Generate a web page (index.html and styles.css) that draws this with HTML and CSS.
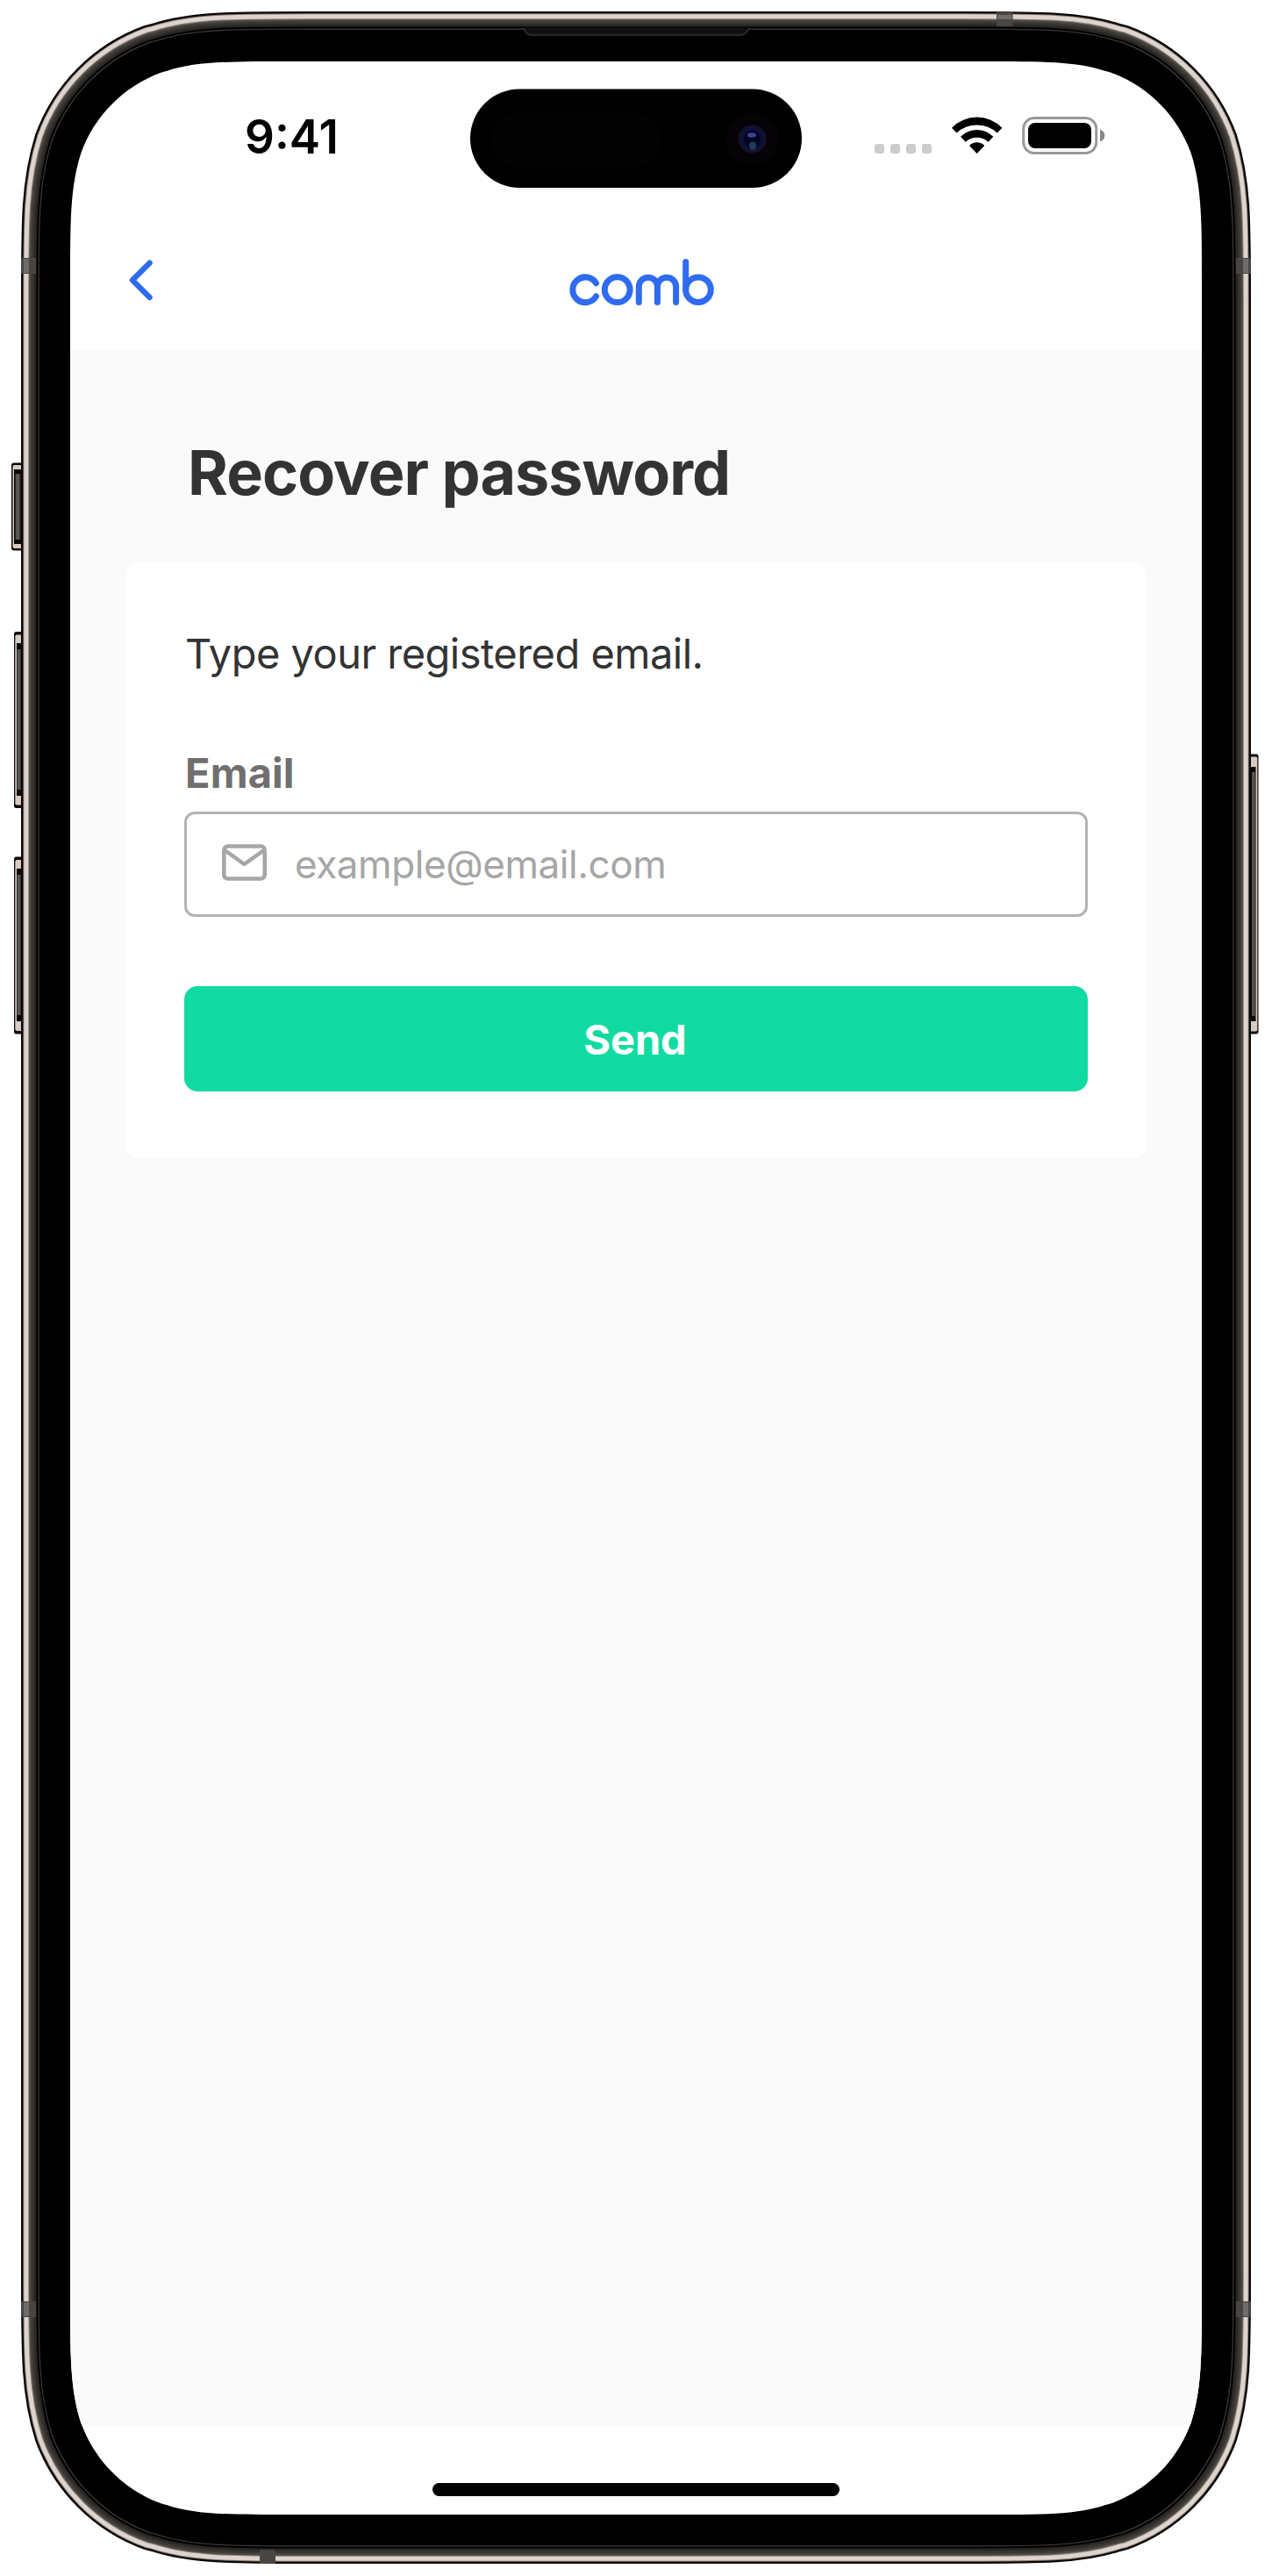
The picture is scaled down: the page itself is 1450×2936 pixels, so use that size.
FILE: index.html
```html
<!DOCTYPE html>
<html lang="en">
<head>
<meta charset="utf-8">
<title>Recover password</title>
<link rel="stylesheet" href="styles.css">
</head>
<body>
<div class="device">
  <svg class="frame" width="1450" height="2936" viewBox="0 0 1450 2936" aria-hidden="true">
    <defs>
      <path id="body" d="M350.7 34H1099.3C1187.3 34 1231.3 34 1271 47.1L1278.7 49C1330.4 67.8 1371.2 108.6 1390 160.3C1405 207.7 1405 251.7 1405 339.7V2595.3C1405 2683.3 1405 2727.3 1390 2774.7C1371.2 2826.4 1330.4 2867.2 1278.7 2886L1271 2887.9C1231.3 2901 1187.3 2901 1099.3 2901H350.7C262.7 2901 218.7 2901 179 2887.9L171.3 2886C119.6 2867.2 78.8 2826.4 60 2774.7C45 2727.3 45 2683.3 45 2595.3V339.7C45 251.7 45 207.7 60 160.3C78.8 108.6 119.6 67.8 171.3 49L179 47.1C218.7 34 262.7 34 350.7 34Z"/>
      <linearGradient id="key" x1="0" x2="1" y1="0" y2="0"><stop offset="0" stop-color="#4b4542"/><stop offset=".5" stop-color="#655f5b"/><stop offset="1" stop-color="#2c2928"/></linearGradient>
    </defs>
    <g class="keys">
      <rect x="13" y="519.5" width="16" height="108" rx="3" fill="none"/>
      <rect x="13" y="527.5" width="16" height="100" rx="3" fill="#0c0a09"/>
      <rect x="14.5" y="530" width="14" height="95" rx="2" fill="#d8ccc2"/>
      <rect x="16" y="535" width="12" height="85" fill="#080808"/>
      <rect x="17.5" y="540" width="6" height="75" fill="url(#key)"/>
      <rect x="16" y="720" width="14" height="201" rx="2.5" fill="#0c0a09"/>
      <rect x="17.3" y="723.5" width="12" height="194" rx="2" fill="#d8ccc2"/>
      <rect x="19" y="733" width="10" height="174" fill="#080808"/>
      <rect x="19.5" y="740" width="4.5" height="160" fill="url(#key)"/>
      <rect x="16" y="976.5" width="14" height="202" rx="2.5" fill="#0c0a09"/>
      <rect x="17.3" y="980" width="12" height="195" rx="2" fill="#d8ccc2"/>
      <rect x="19" y="990" width="10" height="174" fill="#080808"/>
      <rect x="19.5" y="997" width="4.5" height="160" fill="url(#key)"/>
      <rect x="1420" y="859.5" width="14.5" height="319" rx="2.5" fill="#0c0a09"/>
      <rect x="1421" y="862.5" width="12.3" height="313" rx="2" fill="#d8ccc2"/>
      <rect x="1421" y="874" width="10.5" height="290" fill="#080808"/>
      <rect x="1427" y="880" width="4" height="278" fill="url(#key)"/>
    </g>
    <g fill="#000">
      <use href="#body" stroke="#090706" stroke-width="42"/>
      <use href="#body" stroke="#7d736c" stroke-width="37.4"/>
      <use href="#body" stroke="#ddd4ce" stroke-width="35.4"/>
      <use href="#body" stroke="#8a817b" stroke-width="25.6"/>
      <use href="#body" stroke="#4a4642" stroke-width="23.4"/>
      <use href="#body" stroke="#3a3733" stroke-width="19"/>
      <use href="#body" stroke="#2e2b29" stroke-width="14"/>
      <use href="#body" stroke="#252321" stroke-width="10"/>
      <use href="#body" stroke="#000" stroke-width="7"/>
      <use href="#body" stroke="#3b3b3b" stroke-width="3"/>
      <use href="#body" stroke="#000" stroke-width="0.4"/>
    </g>
    <g fill="#484543">
      <rect x="24" y="294" width="17" height="18"/><rect x="1409" y="294" width="17" height="18"/>
      <rect x="24" y="2623" width="17" height="18"/><rect x="1409" y="2623" width="17" height="18"/>
      <rect x="1136" y="14" width="18.5" height="16"/><rect x="296" y="2906" width="18" height="16"/>
    </g>
    <g fill="#6f6c69">
      <rect x="27" y="295" width="6" height="16"/><rect x="1417" y="295" width="6" height="16"/>
      <rect x="27" y="2624" width="6" height="16"/><rect x="1417" y="2624" width="6" height="16"/>
      <rect x="1137" y="17" width="16.500" height="5"/>
    </g>
    <path d="M596 31.500Q598 33 599 36T605 40H845Q850 39 851.500 36T855 31.500Z" fill="#101010"/>
    <path d="M596 32.500Q598 33 599 36T605 40H845Q850 39 851.500 36T855 32.500" fill="none" stroke="#353535" stroke-width="1.300"/>
  </svg>

  <main class="screen">
    <div class="status">
      <time class="clock">9:41</time>
      <svg class="island" width="378" height="113" viewBox="0 0 378 113" aria-hidden="true">
        <rect y="0.500" width="378" height="112.500" rx="56.200" fill="#000"/>
        <rect x="24" y="25.500" width="193" height="65" rx="32.500" fill="#030303"/>
        <circle cx="321.500" cy="57.500" r="30" fill="#060307"/>
        <circle cx="321.500" cy="57.500" r="16" fill="#11132a"/>
        <circle cx="321.500" cy="57.500" r="12" fill="#0b0c46"/>
        <circle cx="321.500" cy="57.500" r="9.500" fill="#04041d"/>
        <ellipse cx="321" cy="53" rx="5" ry="2.800" fill="#3c4594"/>
        <circle cx="322" cy="64.500" r="4" fill="#134256"/>
        <ellipse cx="322" cy="68.500" rx="3.200" ry="1.300" fill="#5a186f"/>
      </svg>
      <svg class="indicators" width="264" height="46" viewBox="996 131 264 46" aria-hidden="true">
        <g fill="#ccc"><rect x="997" y="164" width="11" height="11" rx="3"/><rect x="1015" y="164" width="11" height="11" rx="3"/><rect x="1033" y="164" width="11" height="11" rx="3"/><rect x="1051" y="164" width="11" height="11" rx="3"/></g>
        <path d="M1085 145.700A40 40 0 0 1 1142.300 145.700L1136.800 151.600A34 34 0 0 0 1090.500 151.600ZM1095 155.800A26 26 0 0 1 1132.300 155.800L1126.600 161.700A19.500 19.500 0 0 0 1100.700 161.700ZM1105 166A12 12 0 0 1 1122.300 166L1113.600 175Z"/>
        <rect x="1166.700" y="134.500" width="83" height="40" rx="12.500" fill="none" stroke="#999" stroke-width="3"/>
        <rect x="1172" y="140" width="72" height="29" rx="8"/>
        <path d="M1254 147.500Q1259.300 149.500 1259.300 154.500T1254 161.500Z" fill="#888"/>
      </svg>
    </div>
    <header class="nav">
      <svg class="back" width="28" height="50" viewBox="146 294 28 50" role="img" aria-label="Back"><path d="M170.600 299.700L151 319.300L170.600 339"/></svg>
      <svg class="logo" width="166" height="56" viewBox="648 293 166 56" role="img" aria-label="comb">
        <path d="M679.500 322.800A14.400 14.400 0 1 0 679.500 337.800"/>
        <circle cx="703.700" cy="330.200" r="14.400"/>
        <path d="M728.300 344.500V326.800A10.500 10.500 0 0 1 749.400 326.800V344.500M749.400 326.800A10.600 10.600 0 0 1 770.600 326.800V344.500"/>
        <path d="M781.700 298.500V330.200"/><circle cx="796" cy="330.200" r="14.300"/>
      </svg>
    </header>
    <section class="content">
      <h1>Recover password</h1>
      <form class="card">
        <p class="hint">Type your registered email.</p>
        <label class="label">Email</label>
        <div class="field">
          <svg class="mail" width="54" height="44" viewBox="251 961 54 44" aria-hidden="true"><rect x="255.300" y="964.500" width="46.500" height="37" rx="4.500"/><path d="M255.500 968.500L278.500 985L301.500 968.500"/></svg>
          <span class="placeholder">example@email.com</span>
        </div>
        <button class="send" type="button">Send</button>
      </form>
    </section>
    <footer class="home"><div class="bar"></div></footer>
  </main>
</div>
</body>
</html>
```
FILE: styles.css
```css
* { box-sizing: border-box; }
body {
  margin: 0;
  background: #fff;
  font-family: Inter, "Liberation Sans", sans-serif;
}
.device {
  position: relative;
  width: 1450px;
  height: 2936px;
  padding: 70px 80px;
}
.frame { position: absolute; inset: 0; }
.screen {
  position: relative;
  display: flex;
  flex-direction: column;
  width: 1290px;
  height: 2796px;
  background: #fff;
  clip-path: path("M252.200 0H1037.800C1110.400 0 1146.700 0 1179.500 10.800L1185.800 12.400C1228.500 27.900 1262.100 61.500 1277.600 104.200C1290 143.300 1290 179.600 1290 252.200V2543.800C1290 2616.400 1290 2652.700 1277.600 2691.800C1262.100 2734.500 1228.500 2768.100 1185.800 2783.600L1179.500 2785.200C1146.700 2796 1110.400 2796 1037.800 2796H252.200C179.600 2796 143.300 2796 110.500 2785.200L104.200 2783.600C61.500 2768.100 27.900 2734.500 12.400 2691.800C0 2652.700 0 2616.400 0 2543.800V252.200C0 179.600 0 143.300 12.400 104.200C27.900 61.500 61.500 27.900 104.200 12.400L110.500 10.800C143.300 0 179.600 0 252.200 0Z");
}
.status {
  display: grid;
  grid-template-columns: 456px 378px 456px;
  height: 176px;
  padding-top: 31px;
}
.clock {
  padding-left: 199px;
  padding-top: 23px;
  font-size: 53px;
  font-weight: 600;
  line-height: 64px;
  color: #000;
}
.indicators { margin: 30px 0 0 82px; }
.nav {
  display: grid;
  grid-template-columns: 502px 1fr;
  height: 152px;
}
.back { margin: 48px 0 0 66px; fill: none; stroke: #2f6bee; stroke-width: 6.400px; stroke-linecap: round; stroke-linejoin: round; }
.logo { margin: 47px 0 0 66px; fill: none; stroke: #2f6bee; stroke-width: 7px; stroke-linecap: round; }
.content {
  flex: 1;
  padding: 97px 64px 0;
  background: #fafafa;
  border-top: 1px solid #f7f9fe;
}
h1 {
  margin: 0 0 60px;
  padding-left: 70px;
  font-size: 70px;
  line-height: 85px;
  font-weight: 700;
  letter-spacing: -0.95px;
  color: #333;
}
.card {
  height: 679px;
  padding: 74px 66px 0;
  border-radius: 14px;
  background: #fff;
}
.hint {
  margin: 0;
  padding-left: 1px;
  font-size: 47px;
  line-height: 60px;
  letter-spacing: -0.53px;
  color: #333;
}
.label {
  display: block;
  margin-top: 76px;
  padding-left: 1px;
  font-size: 47px;
  line-height: 60px;
  font-weight: 700;
  letter-spacing: 0.1px;
  color: #6f6f6f;
}
.field {
  display: flex;
  align-items: center;
  gap: 31px;
  height: 120px;
  margin-top: 14px;
  padding-left: 38px;
  border: 3px solid #b3b3b3;
  border-radius: 12px;
}
.mail { margin-top: -4px; fill: none; stroke: #a6a6a6; stroke-width: 4.600px; stroke-linejoin: round; }
.placeholder { font-size: 44px; letter-spacing: -0.43px; color: #a6a6a6; white-space: nowrap; }
.send {
  display: block;
  width: 100%;
  height: 120px;
  margin-top: 79px;
  padding: 1px 2px 0 0;
  border: 0;
  border-radius: 15px;
  background: #12dba2;
  color: #fff;
  font-family: inherit;
  font-size: 47px;
  font-weight: 700;
  letter-spacing: -0.1px;
}
.home {
  display: flex;
  justify-content: center;
  align-items: flex-end;
  height: 100px;
  padding-bottom: 21px;
}
.bar { width: 464px; height: 15px; border-radius: 8px; background: #000; }
```
